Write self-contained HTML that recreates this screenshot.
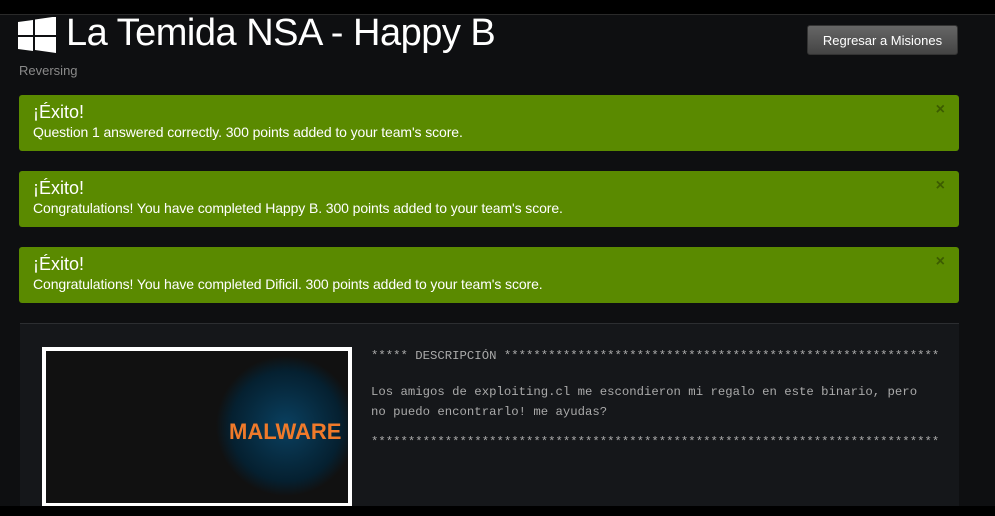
<!DOCTYPE html>
<html><head><meta charset="utf-8"><style>
html,body{margin:0;width:995px;height:516px;overflow:hidden}
body{background:#0e0f11;font-family:"Liberation Sans",sans-serif;position:relative}
.top{position:absolute;left:0;top:0;width:995px;height:14px;background:#000;border-bottom:1px solid #2a2a2a}
h1{position:absolute;left:66px;top:12px;margin:0;font-weight:normal;font-size:38px;color:#fff;letter-spacing:-0.5px}
.win{position:absolute;left:18px;top:17px}
.sub{position:absolute;left:19px;top:63px;color:#8a8a8a;font-size:13px}
.btn{position:absolute;left:807px;top:25px;width:151px;height:30px;background:linear-gradient(#666,#444);border:1px solid #333;border-radius:3px;color:#fff;font-size:13px;line-height:30px;text-align:center;box-sizing:border-box}
.al{position:absolute;left:19px;width:940px;height:56px;background:#5a8a00;border-radius:3px;color:#fff}
.al b{position:absolute;left:14px;top:7px;font-weight:normal;font-size:18px}
.al span{position:absolute;left:14px;top:29px;font-size:14px;letter-spacing:-0.1px}
.al i{position:absolute;right:14px;top:6px;font-style:normal;color:#3c5c00;font-size:16px;font-weight:bold}
.panel{position:absolute;left:20px;top:323px;width:939px;height:183px;background:#15171a;border-top:1px solid #2c2e31}
.img{position:absolute;left:42px;top:347px;width:302px;height:152px;border:4px solid #fff;background:radial-gradient(circle at 240px 75px,#0a4060 0,#052030 55px,#111 70px),#111;overflow:hidden}
.mal{position:absolute;left:183px;top:68px;color:#f07a2a;font:bold 22px "Liberation Sans",sans-serif}
.pre{position:absolute;left:371px;font:12.3px "Liberation Mono",monospace;color:#aaa;white-space:pre;width:567px;overflow:hidden}
.bot{position:absolute;left:0;top:506px;width:995px;height:10px;background:#000}
</style></head><body>
<div class="top"></div>
<svg class="win" width="38" height="36" viewBox="0 0 38 36"><path fill="#fff" d="M0 5l15-2v15H0zM17 2.5l21-3V18H17zM0 20h15v14L0 32zM17 20h21v16l-21-3z"/></svg>
<h1>La Temida NSA - Happy B</h1>
<div class="sub">Reversing</div>
<div class="btn">Regresar a Misiones</div>
<div class="al" style="top:95px"><b>¡Éxito!</b><span>Question 1 answered correctly. 300 points added to your team's score.</span><i>×</i></div>
<div class="al" style="top:171px"><b>¡Éxito!</b><span>Congratulations! You have completed Happy B. 300 points added to your team's score.</span><i>×</i></div>
<div class="al" style="top:247px"><b>¡Éxito!</b><span>Congratulations! You have completed Dificil. 300 points added to your team's score.</span><i>×</i></div>
<div class="panel"></div>
<div class="img"><div class="mal">MALWARE</div></div>
<div class="pre" style="top:349px">***** DESCRIPCIÓN ***************************************************************</div>
<div class="pre" style="top:382px;line-height:20px">Los amigos de exploiting.cl me escondieron mi regalo en este binario, pero
no puedo encontrarlo! me ayudas?</div>
<div class="pre" style="top:435px">*********************************************************************************</div>
<div class="bot"></div>
</body></html>
